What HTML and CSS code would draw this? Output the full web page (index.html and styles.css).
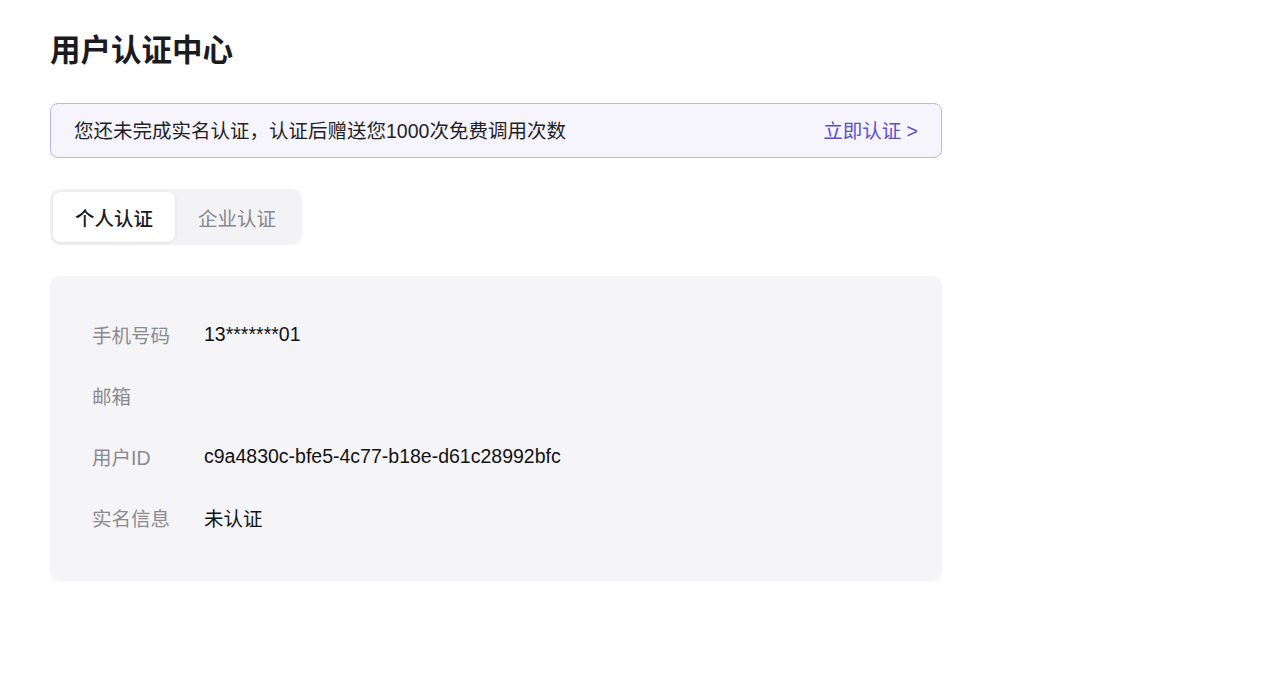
FILE: index.html
```html
<!DOCTYPE html>
<html lang="zh-CN">
<head>
<meta charset="utf-8">
<title>用户认证中心</title>
<link rel="stylesheet" href="styles.css">
</head>
<body>
<main class="page">
  <h1 class="title">用户认证中心</h1>
  <div class="notice">
    <span class="notice-text">您还未完成实名认证，认证后赠送您1000次免费调用次数</span>
    <a class="notice-link" href="#">立即认证 &gt;</a>
  </div>
  <div class="tabs">
    <button class="tab tab-active">个人认证</button>
    <button class="tab">企业认证</button>
  </div>
  <section class="card">
    <div class="row"><span class="label">手机号码</span><span class="value">13*******01</span></div>
    <div class="row"><span class="label">邮箱</span><span class="value"></span></div>
    <div class="row"><span class="label">用户ID</span><span class="value">c9a4830c-bfe5-4c77-b18e-d61c28992bfc</span></div>
    <div class="row"><span class="label">实名信息</span><span class="value">未认证</span></div>
  </section>
</main>
</body>
</html>
```
FILE: styles.css
```css
html, body {
  margin: 0;
  padding: 0;
  background: #ffffff;
}
body {
  font-family: "Liberation Sans", "Noto Sans CJK SC", sans-serif;
  color: #1a1a1a;
}
.page {
  padding: 30px 0 0 50px;
  width: 892px;
}
.title {
  margin: 0;
  font-size: 30.5px;
  line-height: 40px;
  font-weight: 600;
  color: #1b1b1f;
}
.notice {
  margin-top: 33px;
  height: 55px;
  box-sizing: border-box;
  border: 1px solid #bdb6ec;
  background: #f6f5fe;
  border-radius: 8px;
  display: flex;
  align-items: center;
  justify-content: space-between;
  padding: 0 23px 2px 23px;
}
.notice-text {
  font-size: 19.5px;
  color: #1f1f24;
  font-weight: 400;
}
.notice-link {
  font-size: 19.5px;
  color: #5b50c8;
  font-weight: 400;
  text-decoration: none;
}
.tabs {
  margin-top: 31px;
  display: inline-flex;
  padding: 3px;
  background: #f3f3f5;
  border-radius: 10px;
}
.tab {
  font-family: inherit;
  font-size: 19.5px;
  height: 50px;
  padding: 0 22px;
  border: none;
  background: transparent;
  color: #86868c;
  border-radius: 8px;
  cursor: pointer;
}
.tab + .tab {
  padding: 0 23px;
}
.tab-active {
  background: #ffffff;
  color: #1b1b1f;
  font-weight: 500;
  box-shadow: 0 1px 4px rgba(0, 0, 0, 0.08);
}
.card {
  margin-top: 31px;
  background: #f5f5f7;
  border-radius: 10px;
  padding: 28px 42px 33px;
}
.row {
  display: flex;
  align-items: center;
  height: 61px;
  font-size: 19.5px;
}
.label {
  width: 112px;
  flex-shrink: 0;
  color: #8a8a90;
}
.value {
  color: #111114;
}
```
